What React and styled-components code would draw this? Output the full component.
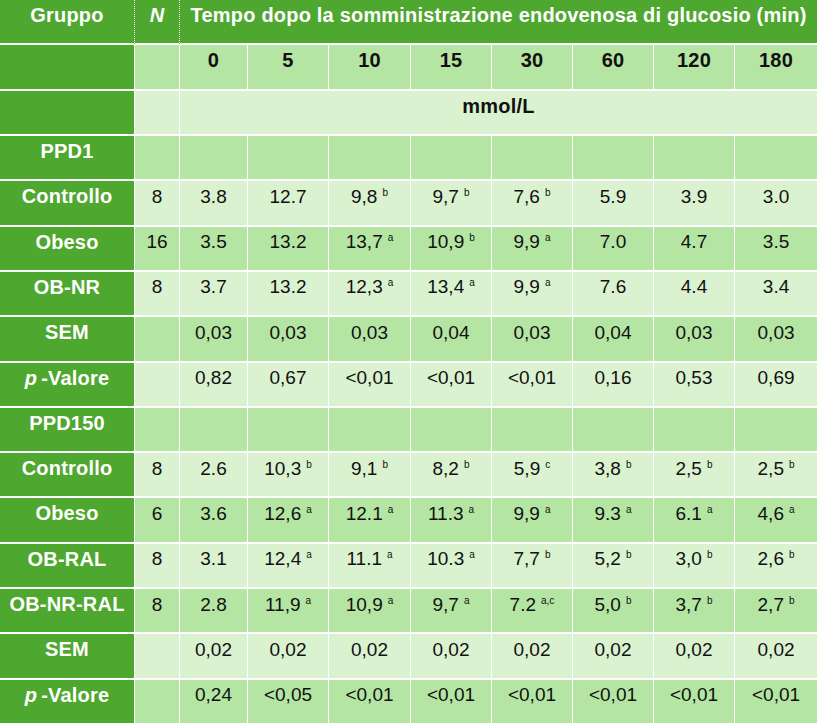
import { createGlobalStyle, styled } from "styled-components";

const GlobalStyle = createGlobalStyle`
  html, body {
    margin: 0;
    padding: 0;
    background: #fff;
  }
  body {
    font-family: "Liberation Sans", Arial, sans-serif;
  }
`;

const DARK = "#4ea72e";
const MID = "#b4e5a2";
const LIGHT = "#daf2d0";

const widths = [135, 45, 68, 81, 82, 81, 81, 81, 81, 82];
const times = ["0", "5", "10", "15", "30", "60", "120", "180"];

// value strings: "9,8|b" means 9,8 with superscript b
const ppd1 = [
  { label: "Controllo", n: "8", vals: ["3.8", "12.7", "9,8|b", "9,7|b", "7,6|b", "5.9", "3.9", "3.0"] },
  { label: "Obeso", n: "16", vals: ["3.5", "13.2", "13,7|a", "10,9|b", "9,9|a", "7.0", "4.7", "3.5"] },
  { label: "OB-NR", n: "8", vals: ["3.7", "13.2", "12,3|a", "13,4|a", "9,9|a", "7.6", "4.4", "3.4"] },
  { label: "SEM", n: "", vals: ["0,03", "0,03", "0,03", "0,04", "0,03", "0,04", "0,03", "0,03"] },
  { label: "p", n: "", vals: ["0,82", "0,67", "<0,01", "<0,01", "<0,01", "0,16", "0,53", "0,69"] },
];

const ppd150 = [
  { label: "Controllo", n: "8", vals: ["2.6", "10,3|b", "9,1|b", "8,2|b", "5,9|c", "3,8|b", "2,5|b", "2,5|b"] },
  { label: "Obeso", n: "6", vals: ["3.6", "12,6|a", "12.1|a", "11.3|a", "9,9|a", "9.3|a", "6.1|a", "4,6|a"] },
  { label: "OB-RAL", n: "8", vals: ["3.1", "12,4|a", "11.1|a", "10.3|a", "7,7|b", "5,2|b", "3,0|b", "2,6|b"] },
  { label: "OB-NR-RAL", n: "8", vals: ["2.8", "11,9|a", "10,9|a", "9,7|a", "7.2|a,c", "5,0|b", "3,7|b", "2,7|b"] },
  { label: "SEM", n: "", vals: ["0,02", "0,02", "0,02", "0,02", "0,02", "0,02", "0,02", "0,02"] },
  { label: "p", n: "", vals: ["0,24", "<0,05", "<0,01", "<0,01", "<0,01", "<0,01", "<0,01", "<0,01"] },
];

const Table = styled.table`
  width: 817px;
  height: 725px;
  table-layout: fixed;
  border-collapse: separate;
  border-spacing: 0;
  font-size: 19px;
  color: #111;
`;

const Row = styled.tr`
  height: 45.3px;
`;

const Cell = styled.td`
  box-sizing: border-box;
  padding: ${(p) => (p.$bold ? "4px" : "4.5px")} 2px 0;
  vertical-align: top;
  text-align: center;
  white-space: nowrap;
  background: ${(p) => (p.$tone === "dark" ? DARK : p.$tone === "mid" ? MID : LIGHT)};
  color: ${(p) => (p.$tone === "dark" ? "#fff" : "#111")};
  font-weight: ${(p) => (p.$bold ? 700 : 400)};
  font-size: ${(p) => (p.$bold ? "20px" : "19px")};
  letter-spacing: ${(p) => (p.$bold ? "0.2px" : "0")};
  border-bottom: 2px solid #fff;
  border-right: 1px ${(p) => (p.$dotted ? "dotted" : "solid")} #fff;
  &:last-child {
    border-right: none;
  }
`;

const Label = styled(Cell).attrs({ $tone: "dark", $bold: true })``;

const Sup = styled.sup`
  font-size: 10px;
  vertical-align: 7px;
  line-height: 0;
  margin-left: 5px;
`;

const Italic = styled.i`
  margin-right: 4px;
`;

function Value({ v }) {
  const [num, sup] = v.split("|");
  return (
    <>
      {num}
      {sup && <Sup>{sup}</Sup>}
    </>
  );
}

function GroupLabel({ label }) {
  if (label === "p") {
    return (
      <>
        <Italic>p</Italic>-Valore
      </>
    );
  }
  return label;
}

function DataRows({ rows }) {
  return rows.map((r, i) => {
    const tone = i % 2 === 0 ? "light" : "mid";
    return (
      <Row key={r.label + i}>
        <Label>
          <GroupLabel label={r.label} />
        </Label>
        <Cell $tone={tone}>{r.n}</Cell>
        {r.vals.map((v, j) => (
          <Cell key={j} $tone={tone}>
            <Value v={v} />
          </Cell>
        ))}
      </Row>
    );
  });
}

function SectionRow({ name }) {
  return (
    <Row>
      <Label>{name}</Label>
      {widths.slice(1).map((_, i) => (
        <Cell key={i} $tone="mid" />
      ))}
    </Row>
  );
}

export default function App() {
  return (
    <>
      <GlobalStyle />
      <Table>
        <colgroup>
          {widths.map((w, i) => (
            <col key={i} style={{ width: w }} />
          ))}
        </colgroup>
        <tbody>
          <Row>
            <Label $dotted>Gruppo</Label>
            <Label $dotted>
              <i>N</i>
            </Label>
            <Label colSpan={8}>
              Tempo dopo la somministrazione endovenosa di glucosio (min)
            </Label>
          </Row>
          <Row>
            <Label />
            <Cell $tone="mid" />
            {times.map((t) => (
              <Cell key={t} $tone="mid" $bold>
                {t}
              </Cell>
            ))}
          </Row>
          <Row>
            <Label />
            <Cell $tone="light" />
            <Cell $tone="light" $bold colSpan={8}>
              mmol/L
            </Cell>
          </Row>
          <SectionRow name="PPD1" />
          <DataRows rows={ppd1} />
          <SectionRow name="PPD150" />
          <DataRows rows={ppd150} />
        </tbody>
      </Table>
    </>
  );
}
